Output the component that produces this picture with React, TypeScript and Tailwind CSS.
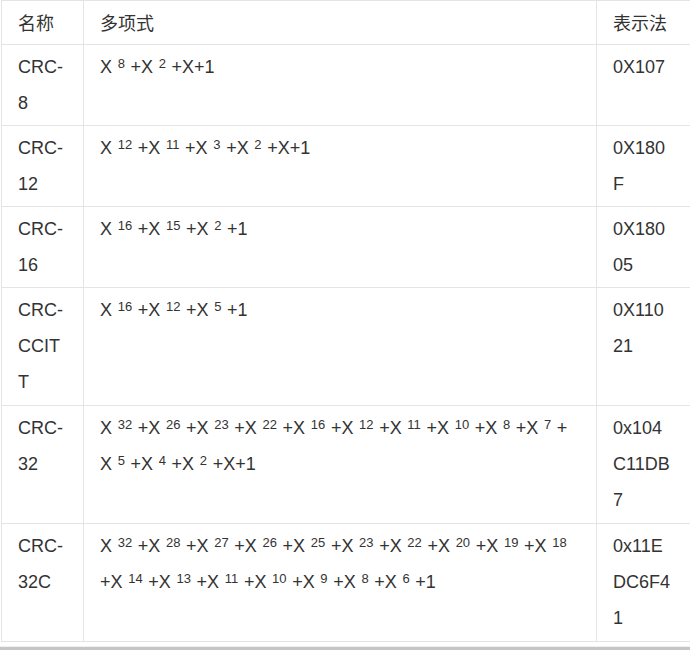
import React, { Fragment } from "react";

type Row = { name: string; poly: string; code: string; tall: boolean };

const rows: Row[] = [
  { name: "CRC-8", poly: "X^8+X^2+X+1", code: "0X107", tall: false },
  { name: "CRC-12", poly: "X^12+X^11+X^3+X^2+X+1", code: "0X180F", tall: false },
  { name: "CRC-16", poly: "X^16+X^15+X^2+1", code: "0X18005", tall: false },
  { name: "CRC-CCITT", poly: "X^16+X^12+X^5+1", code: "0X11021", tall: true },
  {
    name: "CRC-32",
    poly: "X^32+X^26+X^23+X^22+X^16+X^12+X^11+X^10+X^8+X^7+ X^5+X^4+X^2+X+1",
    code: "0x104C11DB7",
    tall: true,
  },
  {
    name: "CRC-32C",
    poly: "X^32+X^28+X^27+X^26+X^25+X^23+X^22+X^20+X^19+X^18+X^14+X^13+X^11+X^10+X^9+X^8+X^6+1",
    code: "0x11EDC6F41",
    tall: true,
  },
];

function Poly({ expr }: { expr: string }) {
  const parts = expr.split(/\^(\d+)/);
  return (
    <>
      {parts.map((p, i) =>
        i % 2 === 1 ? (
          <Fragment key={i}>
            {"\u00a0"}
            <sup className="text-[13px] mx-[0.64px] top-[-5px]">{p}</sup>{" "}
          </Fragment>
        ) : (
          <Fragment key={i}>{p}</Fragment>
        )
      )}
    </>
  );
}

export default function App() {
  const cellShort =
    "border border-[#e4e4e4] px-4 pt-[4px] pb-[4px] align-top text-left";
  const cellTall =
    "border border-[#e4e4e4] px-4 pt-[4px] pb-[5px] align-top text-left";
  const head =
    "border border-[#e4e4e4] px-4 pt-[3px] pb-[4px] align-top text-left font-normal";
  return (
    <div className="w-[690px] h-[650px] overflow-hidden bg-white">
      <table
        className="table-fixed border-collapse w-[689px] ml-[1px] text-[#333] text-[18px] leading-[36px]"
        style={{ fontFamily: '"Liberation Sans", Arial, sans-serif' }}
      >
        <colgroup>
          <col className="w-[82px]" />
          <col className="w-[513px]" />
          <col className="w-[94px]" />
        </colgroup>
        <thead>
          <tr>
            {["名称", "多项式", "表示法"].map((h) => (
              <th
                key={h}
                className={head}
                style={{ fontFamily: '"Noto Sans CJK SC", sans-serif' }}
              >
                {h}
              </th>
            ))}
          </tr>
        </thead>
        <tbody>
          {rows.map((r) => {
            const cell = r.tall ? cellTall : cellShort;
            return (
              <tr key={r.name}>
                <td className={cell}>
                  <div className="w-[49px] break-words">{r.name}</div>
                </td>
                <td className={cell}>
                  <div className="w-[480px]">
                    <Poly expr={r.poly} />
                  </div>
                </td>
                <td className={cell}>
                  <div className="w-[60px] break-words">{r.code}</div>
                </td>
              </tr>
            );
          })}
        </tbody>
      </table>
      <div className="mt-[4px] h-[1px] bg-[#efefef]" />
      <div className="h-[8px] bg-[#c6c6c6]" />
    </div>
  );
}
